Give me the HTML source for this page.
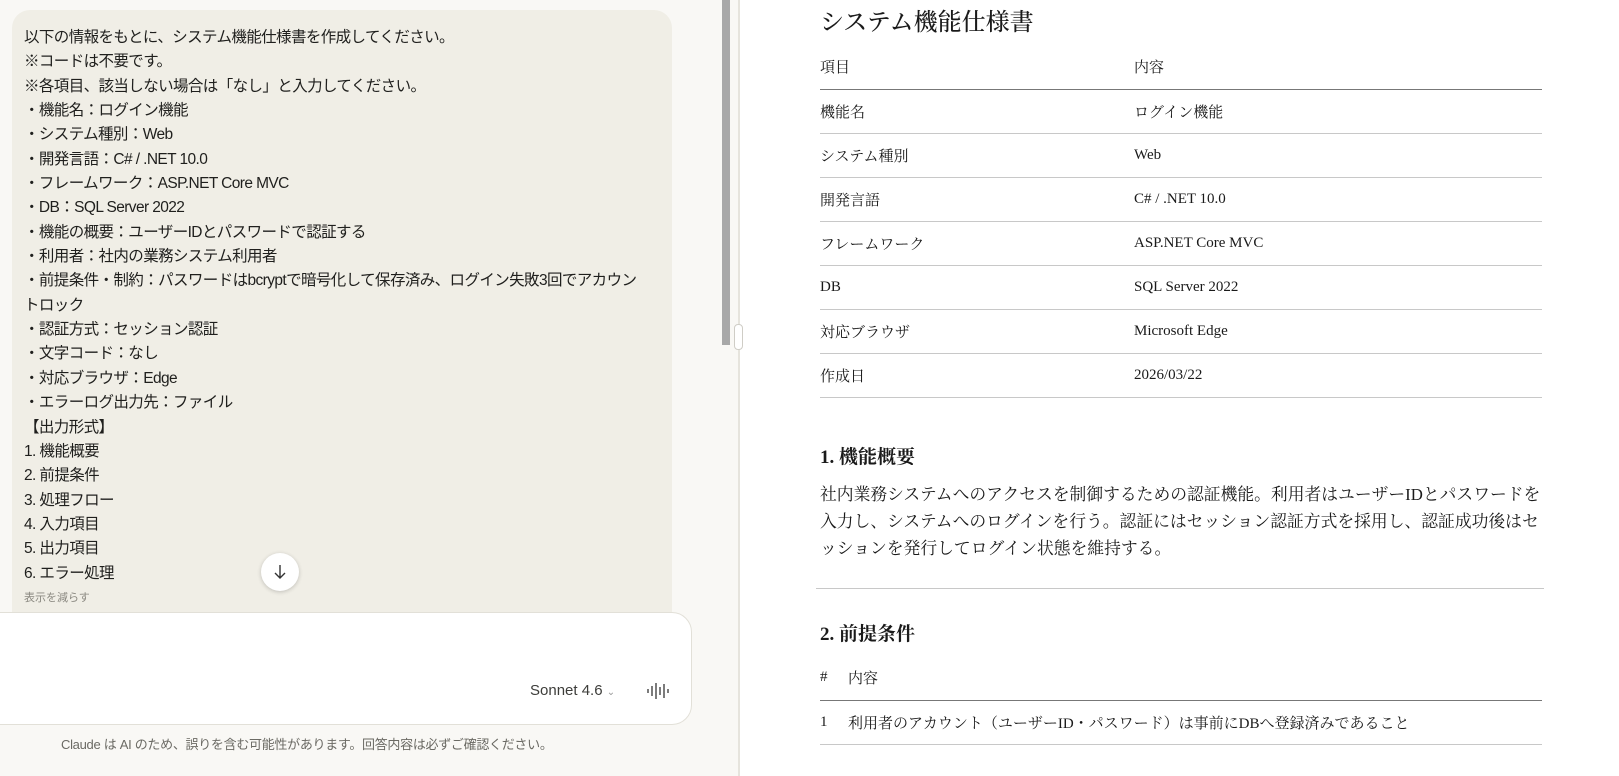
<!DOCTYPE html>
<html><head><meta charset="utf-8"><style>
*{margin:0;padding:0;box-sizing:border-box}
body{width:1619px;height:776px;overflow:hidden;background:#fff;position:relative;font-family:"Liberation Sans","Noto Sans CJK JP",sans-serif}
#left{position:absolute;left:0;top:0;width:738px;height:776px;background:#f9f8f5}
#bubble{position:absolute;left:12px;top:10px;width:660px;height:640px;background:#f0eee6;border-radius:18px;padding:16px 12px 0 12px;color:#1f1f1d;font-size:15.5px;line-height:24.35px;letter-spacing:-0.6px}
#bubble .sm{font-size:11px;color:#8a8880;margin-top:0;letter-spacing:0}
#down{position:absolute;left:261px;top:553px;width:38px;height:38px;border-radius:50%;background:#fff;box-shadow:0 1px 4px rgba(0,0,0,.2);display:flex;align-items:center;justify-content:center}
#input{position:absolute;left:-20px;top:612px;width:712px;height:113px;background:#fff;border:1px solid #e2e0d8;border-radius:20px}
#model{position:absolute;left:530px;top:682px;font-size:15px;color:#3d3d3a}
#note{position:absolute;left:61px;top:734px;font-size:13px;color:#6b6a64;letter-spacing:-0.3px}
#sb{position:absolute;left:722px;top:0;width:8px;height:345px;background:#a8a8a8}
#div{position:absolute;left:738px;top:0;width:2px;height:776px;background:#e6e4dd}
#handle{position:absolute;left:734px;top:324px;width:9px;height:26px;background:#fff;border:1px solid #cfcdc6;border-radius:4px}
#right{position:absolute;left:820px;top:0;width:722px;font-family:"Liberation Serif","Noto Serif CJK SC",serif;color:#1a1a1a}
h1{font-size:24px;font-weight:500;position:absolute;top:2px;left:0;white-space:nowrap}
table{border-collapse:collapse;width:722px;position:absolute;left:0;font-size:15px}
td,th{text-align:left;font-weight:normal;height:44px;border-bottom:1px solid #c8c8c8;padding:0}
th{border-bottom:1.5px solid #777;height:44px}
h2{position:absolute;font-size:19px;font-weight:bold;left:0;white-space:nowrap}
p{position:absolute;left:0;top:481px;width:724px;font-size:16.8px;line-height:27px}
.hr{position:absolute;left:-4px;width:728px;height:1px;background:#c8c8c8}
</style></head><body>
<div id="left">
<div id="bubble">
以下の情報をもとに、システム機能仕様書を作成してください。<br>
※コードは不要です。<br>
※各項目、該当しない場合は「なし」と入力してください。<br>
・機能名：ログイン機能<br>
・システム種別：Web<br>
・開発言語：C# / .NET 10.0<br>
・フレームワーク：ASP.NET Core MVC<br>
・DB：SQL Server 2022<br>
・機能の概要：ユーザーIDとパスワードで認証する<br>
・利用者：社内の業務システム利用者<br>
・前提条件・制約：パスワードはbcryptで暗号化して保存済み、ログイン失敗3回でアカウン<br>トロック<br>
・認証方式：セッション認証<br>
・文字コード：なし<br>
・対応ブラウザ：Edge<br>
・エラーログ出力先：ファイル<br>
【出力形式】<br>
1. 機能概要<br>
2. 前提条件<br>
3. 処理フロー<br>
4. 入力項目<br>
5. 出力項目<br>
6. エラー処理
<div class="sm">表示を減らす</div>
</div>
<div id="down"><svg width="16" height="18" viewBox="0 0 16 18"><path d="M8 2v13M3 10l5 5 5-5" stroke="#333" stroke-width="1.4" fill="none"/></svg></div>
<div id="input"></div>
<div id="model">Sonnet 4.6 <span style="font-size:10px;color:#999">&#8964;</span></div>
<svg style="position:absolute;left:646px;top:682px" width="24" height="18" viewBox="0 0 24 18"><path d="M2 7v4M6 4v10M10 1v16M14 5v8M18 2v14M22 7v4" stroke="#444" stroke-width="1.4"/></svg>
<div id="note">Claude は AI のため、誤りを含む可能性があります。回答内容は必ずご確認ください。</div>
<div id="sb"></div>
</div>
<div id="div"></div><div id="handle"></div>
<div id="right">
<h1>システム機能仕様書</h1>
<table style="top:45px">
<tr><th style="width:314px">項目</th><th>内容</th></tr>
<tr><td>機能名</td><td>ログイン機能</td></tr>
<tr><td>システム種別</td><td>Web</td></tr>
<tr><td>開発言語</td><td>C# / .NET 10.0</td></tr>
<tr><td>フレームワーク</td><td>ASP.NET Core MVC</td></tr>
<tr><td>DB</td><td>SQL Server 2022</td></tr>
<tr><td>対応ブラウザ</td><td>Microsoft Edge</td></tr>
<tr><td>作成日</td><td>2026/03/22</td></tr>
</table>
<h2 style="top:442px">1. 機能概要</h2>
<p>社内業務システムへのアクセスを制御するための認証機能。利用者はユーザーIDとパスワードを入力し、システムへのログインを行う。認証にはセッション認証方式を採用し、認証成功後はセッションを発行してログイン状態を維持する。</p>
<div class="hr" style="top:588px"></div>
<h2 style="top:619px">2. 前提条件</h2>
<table style="top:656px">
<tr><th style="width:28px">#</th><th>内容</th></tr>
<tr><td>1</td><td>利用者のアカウント（ユーザーID・パスワード）は事前にDBへ登録済みであること</td></tr>
</table>
</div>
</body></html>
